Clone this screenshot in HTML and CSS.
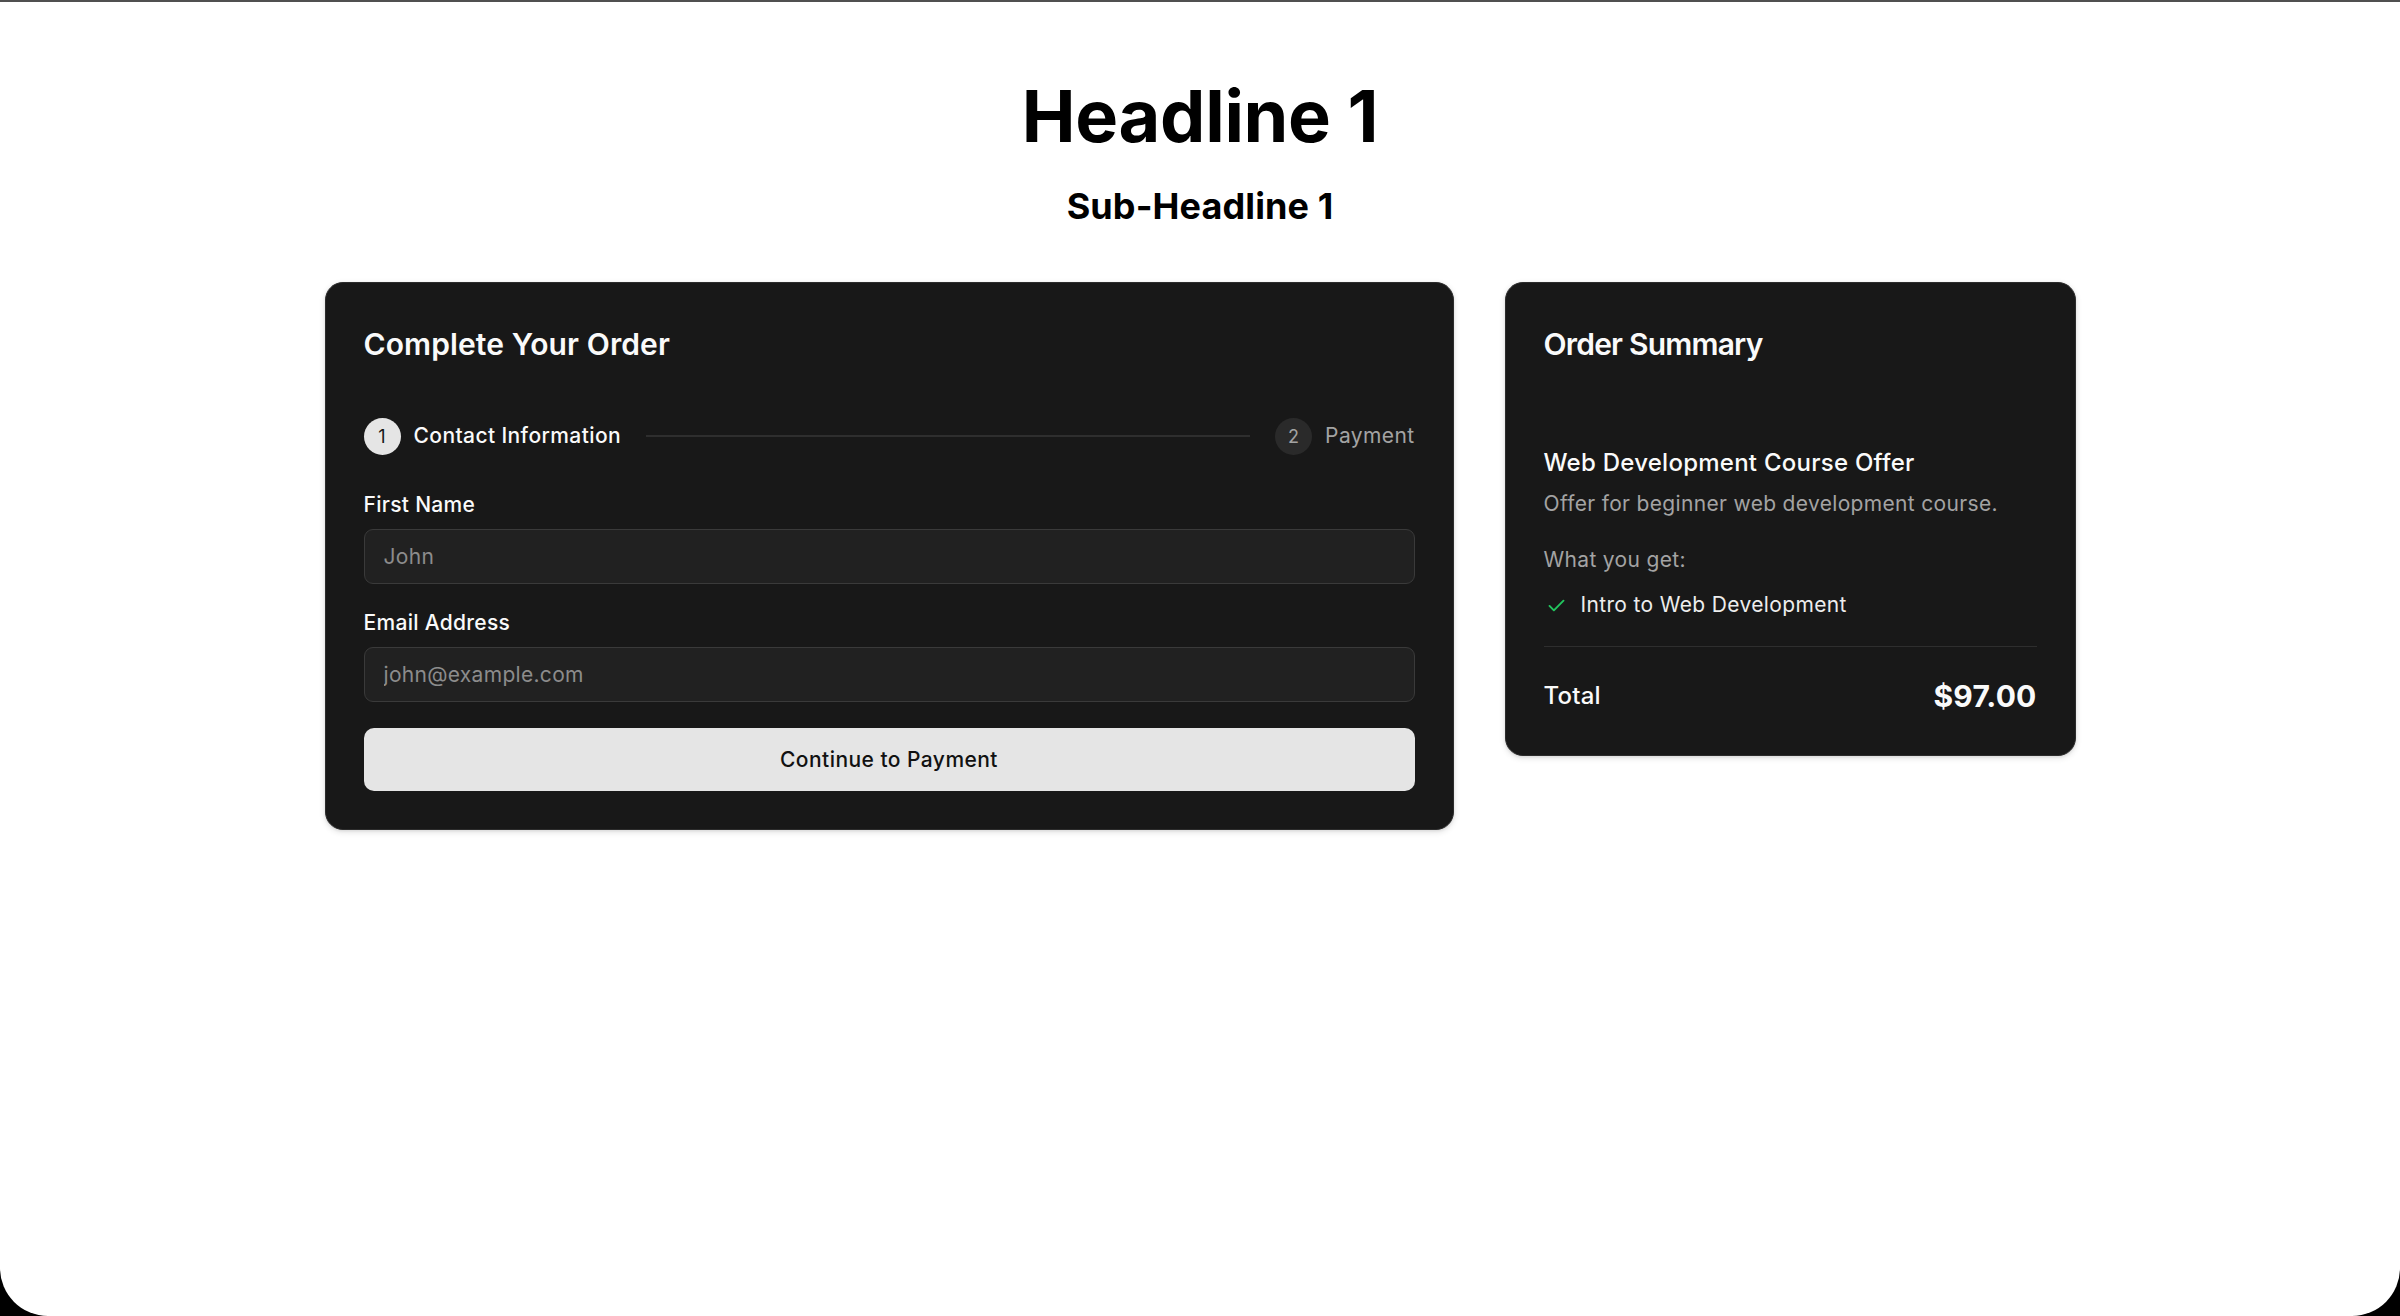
FILE: index.html
```html
<!DOCTYPE html>
<html lang="en">
<head>
<meta charset="utf-8">
<title>Checkout</title>
<link rel="stylesheet" href="styles.css">
</head>
<body>
<div class="window">
  <header class="hero">
    <h1 class="headline">Headline 1</h1>
    <h2 class="subheadline">Sub-Headline 1</h2>
  </header>
  <main class="checkout">
    <section class="card order-card">
      <h3 class="card-title">Complete Your Order</h3>
      <div class="steps">
        <div class="step step-active">
          <span class="step-num">1</span>
          <span class="step-label">Contact Information</span>
        </div>
        <div class="step-line"></div>
        <div class="step step-idle">
          <span class="step-num">2</span>
          <span class="step-label">Payment</span>
        </div>
      </div>
      <form class="form">
        <div class="field">
          <label class="field-label" for="fname">First Name</label>
          <input class="field-input" id="fname" type="text" placeholder="John">
        </div>
        <div class="field">
          <label class="field-label" for="email">Email Address</label>
          <input class="field-input" id="email" type="email" placeholder="john@example.com">
        </div>
        <button class="btn" type="button">Continue to Payment</button>
      </form>
    </section>
    <aside class="card summary-card">
      <h3 class="card-title summary-title">Order Summary</h3>
      <div class="product">
        <div class="product-name">Web Development Course Offer</div>
        <div class="product-desc">Offer for beginner web development course.</div>
        <div class="perks-title">What you get:</div>
        <ul class="perks">
          <li class="perk">
            <svg class="check" viewBox="0 0 24 24" width="21" height="21" fill="none" stroke="#22c55e" stroke-width="2.2" stroke-linecap="round" stroke-linejoin="round"><path d="M4 12.5l5 5L20 6.5"/></svg>
            <span>Intro to Web Development</span>
          </li>
        </ul>
      </div>
      <div class="total">
        <span class="total-label">Total</span>
        <span class="total-price">$97.00</span>
      </div>
    </aside>
  </main>
</div>
</body>
</html>
```
FILE: styles.css
```css
* { box-sizing: border-box; }
html, body { margin: 0; padding: 0; background: #000; }
body { font-family: Inter, "Noto Sans", "Liberation Sans", sans-serif; }

.window {
  background: #fff;
  height: 1316px;
  border-top: 2px solid #505050;
  border-bottom-left-radius: 48px;
  border-bottom-right-radius: 48px;
  padding-top: 78px;
  overflow: hidden;
}

.hero { text-align: center; }
.headline {
  margin: 0;
  font-size: 72px;
  line-height: 72px;
  font-weight: 700;
  letter-spacing: -0.3px;
  color: #000;
}
.subheadline {
  margin: 34px 0 0;
  font-size: 36px;
  line-height: 40px;
  font-weight: 700;
  letter-spacing: 0.1px;
  color: #000;
}

.checkout {
  width: 1751px;
  margin: 56px auto 0;
  display: grid;
  grid-template-columns: 1129px 571px;
  column-gap: 51px;
  align-items: start;
}

.card {
  background: #181818;
  border: 1px solid #2c2c2c;
  border-radius: 18px;
  padding: 40px 38px 38px;
  box-shadow: 0 2px 6px rgba(0,0,0,0.12), 0 1px 3px rgba(0,0,0,0.08);
  color: #fff;
}

.card-title {
  margin: 0;
  font-size: 30px;
  line-height: 42px;
  font-weight: 600;
  letter-spacing: 0.1px;
  color: #fafafa;
}
.summary-title { letter-spacing: -0.8px; }

.steps {
  margin-top: 53px;
  height: 36px;
  display: flex;
  align-items: center;
}
.step { display: flex; align-items: center; gap: 13px; }
.step-num {
  width: 37px;
  height: 37px;
  border-radius: 50%;
  display: flex;
  align-items: center;
  justify-content: center;
  font-size: 18px;
  font-weight: 400;
}
.step-label { font-size: 21px; line-height: 30px; letter-spacing: 0.4px; }
.step-active .step-num { background: #e5e5e5; color: #171717; }
.step-active .step-label { color: #fafafa; font-weight: 500; }
.step-idle .step-num { background: #2a2a2a; color: #a3a3a3; }
.step-idle .step-label { color: #a3a3a3; }
.step-line {
  flex: 1;
  height: 2px;
  background: #2e2e2e;
  margin: 0 25px;
}

.form { margin-top: 36px; display: flex; flex-direction: column; }
.field { display: flex; flex-direction: column; margin-bottom: 24px; }
.field-label {
  font-size: 21px;
  line-height: 30px;
  font-weight: 500;
  letter-spacing: 0.3px;
  color: #fafafa;
  margin-bottom: 9px;
}
.field-input {
  height: 55px;
  background: #212121;
  border: 1.5px solid #3a3a3a;
  border-radius: 9px;
  padding: 0 19px;
  font-family: inherit;
  font-size: 21px;
  letter-spacing: 0.3px;
  color: #fff;
  outline: none;
}
.field-input::placeholder { color: #8c8c8c; }

.btn {
  margin-top: 2px;
  height: 63px;
  border: none;
  border-radius: 10px;
  background: #e5e5e5;
  color: #111;
  font-family: inherit;
  font-size: 21px;
  font-weight: 500;
  letter-spacing: 0.45px;
}

.product { margin-top: 80px; }
.product-name {
  font-size: 24px;
  line-height: 36px;
  font-weight: 500;
  letter-spacing: 0.25px;
  color: #fafafa;
}
.product-desc {
  margin-top: 8px;
  font-size: 21px;
  line-height: 30px;
  letter-spacing: 0.33px;
  color: #a3a3a3;
}
.perks-title {
  margin-top: 26px;
  font-size: 21px;
  line-height: 30px;
  letter-spacing: 0.33px;
  color: #a3a3a3;
}
.perks { list-style: none; margin: 15px 0 0; padding: 0; }
.perk {
  display: flex;
  align-items: center;
  gap: 14px;
  font-size: 21px;
  line-height: 30px;
  letter-spacing: 0.35px;
  color: #ededed;
}
.check { margin-left: 2px; flex: none; }

.total {
  margin-top: 26px;
  border-top: 1.5px solid #2e2e2e;
  padding-top: 28px;
  display: flex;
  align-items: center;
  justify-content: space-between;
  height: 42px;
  box-sizing: content-box;
}
.total-label { font-size: 24px; line-height: 36px; font-weight: 500; letter-spacing: 0.2px; color: #fafafa; }
.total-price { font-size: 30px; line-height: 42px; font-weight: 700; letter-spacing: 0.2px; color: #fafafa; }
```
